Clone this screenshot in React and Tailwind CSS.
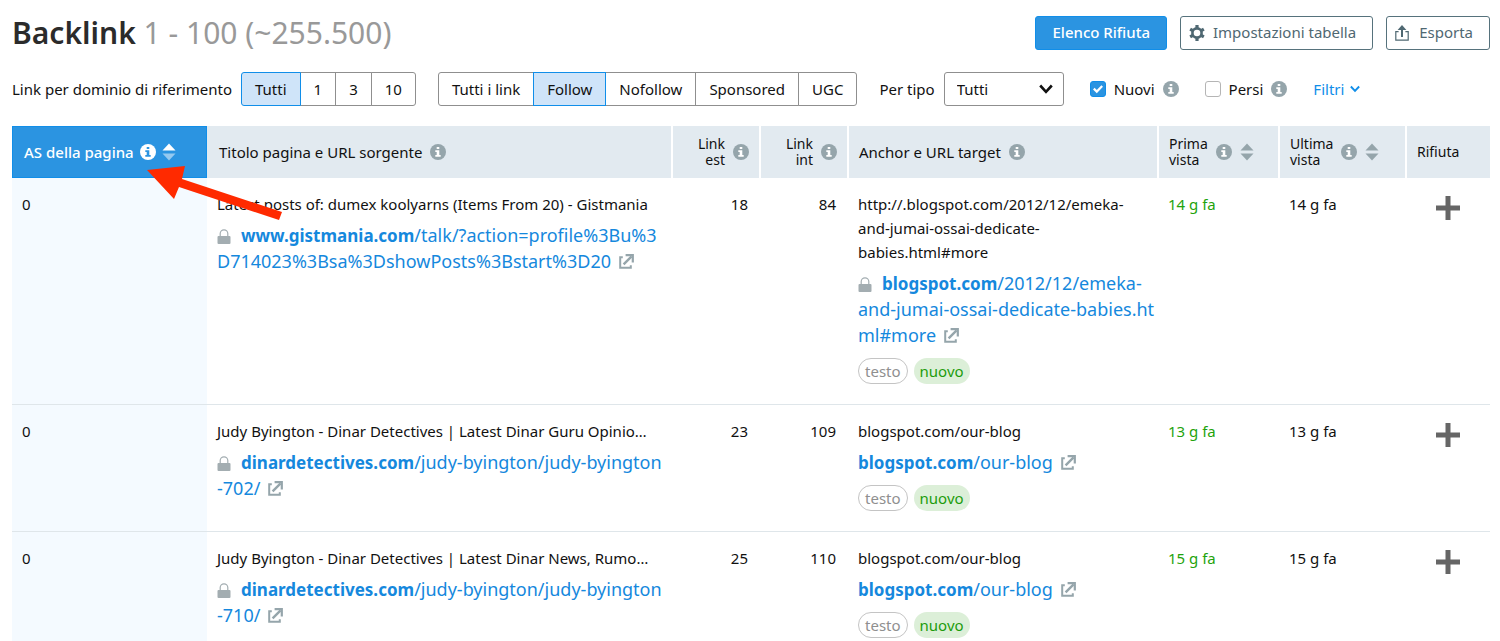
import React from "react";

const DOMAIN_OPTIONS = ["Tutti", "1", "3", "10"];
const FOLLOW_OPTIONS = ["Tutti i link", "Follow", "Nofollow", "Sponsored", "UGC"];

const ROWS = [
  {
    id: 1,
    score: 0,
    title: "Latest posts of: dumex koolyarns (Items From 20) - Gistmania",
    source: {
      secure: true,
      host: "www.gistmania.com",
      lines: ["/talk/?action=profile%3Bu%3", "D714023%3Bsa%3DshowPosts%3Bstart%3D20"],
    },
    external: 18,
    internal: 84,
    anchor: ["http://.blogspot.com/2012/12/emeka-", "and-jumai-ossai-dedicate-", "babies.html#more"],
    target: {
      secure: true,
      host: "blogspot.com",
      lines: ["/2012/12/emeka-", "and-jumai-ossai-dedicate-babies.ht", "ml#more"],
    },
    first: "14 g fa",
    last: "14 g fa",
  },
  {
    id: 2,
    score: 0,
    title: "Judy Byington - Dinar Detectives | Latest Dinar Guru Opinio…",
    source: {
      secure: true,
      host: "dinardetectives.com",
      lines: ["/judy-byington/judy-byington", "-702/"],
    },
    external: 23,
    internal: 109,
    anchor: ["blogspot.com/our-blog"],
    target: { secure: false, host: "blogspot.com", lines: ["/our-blog"] },
    first: "13 g fa",
    last: "13 g fa",
  },
  {
    id: 3,
    score: 0,
    title: "Judy Byington - Dinar Detectives | Latest Dinar News, Rumo…",
    source: {
      secure: true,
      host: "dinardetectives.com",
      lines: ["/judy-byington/judy-byington", "-710/"],
    },
    external: 25,
    internal: 110,
    anchor: ["blogspot.com/our-blog"],
    target: { secure: false, host: "blogspot.com", lines: ["/our-blog"] },
    first: "15 g fa",
    last: "15 g fa",
  },
];

function InfoIcon({ className = "text-[#95a5ab]", mark = "#fff" }) {
  return (
    <svg viewBox="0 0 16 16" className={`h-4 w-4 shrink-0 ${className}`} aria-hidden="true">
      <circle cx="8" cy="8" r="8" fill="currentColor" />
      <path d="M6.7 2.9h2.6v2H6.7zM5.3 6.3h4v4.8h1.4v1.6H5.3v-1.6h1.4V7.9H5.3z" fill={mark} />
    </svg>
  );
}

function SortIcon({ active }) {
  return (
    <svg viewBox="0 0 14 18" className="h-[18px] w-3.5 shrink-0" aria-hidden="true">
      <path d="M7 .5L13.5 7.5H.5z" fill={active ? "#fff" : "#95a5ab"} />
      <path d="M7 17.5l6.5-7H.5z" fill={active ? "#95c9f0" : "#95a5ab"} />
    </svg>
  );
}

function LockIcon() {
  return (
    <svg viewBox="0 0 14 15" className="mr-2.5 inline-block h-[15px] w-3.5 align-[-2px]" aria-hidden="true">
      <path d="M3.2 7.5V4.6a3.8 3.8 0 0 1 7.6 0v2.9" fill="none" stroke="#a3adb1" strokeWidth="1.2" />
      <rect x="0.5" y="7" width="13" height="8" rx="1" fill="#a3adb1" />
    </svg>
  );
}

function ExternalIcon() {
  return (
    <svg viewBox="0 0 15 15" className="ml-2 inline-block h-[15px] w-[15px] align-[-1px]" aria-hidden="true">
      <path d="M3.8 3.2H1.2v10.6h10.6v-2.6" fill="none" stroke="#95a5ab" strokeWidth="2" />
      <path d="M4.6 10.4L12.6 2.4" fill="none" stroke="#95a5ab" strokeWidth="2.4" />
      <path d="M6.6 1.2h7.2v7.2" fill="none" stroke="#95a5ab" strokeWidth="2.2" />
    </svg>
  );
}

function GearIcon() {
  return (
    <svg viewBox="0 0 16 16" className="h-4 w-4 shrink-0" aria-hidden="true">
      <circle cx="8" cy="8" r="4.6" fill="none" stroke="currentColor" strokeWidth="2.6" />
      <path d="M6.4.1h3.2v3H6.4zM6.4 12.9h3.2v3H6.4z" fill="currentColor" />
      <path d="M6.4.1h3.2v3H6.4zM6.4 12.9h3.2v3H6.4z" fill="currentColor" transform="rotate(60 8 8)" />
      <path d="M6.4.1h3.2v3H6.4zM6.4 12.9h3.2v3H6.4z" fill="currentColor" transform="rotate(120 8 8)" />
    </svg>
  );
}

function ExportIcon() {
  return (
    <svg viewBox="0 0 14 16" className="h-4 w-3.5 shrink-0" aria-hidden="true">
      <path d="M3.6 6.6H.8v8.6h12.4V6.6h-2.8" fill="none" stroke="currentColor" strokeWidth="1.2" />
      <path d="M7 12V3" fill="none" stroke="currentColor" strokeWidth="2" />
      <path d="M7 0l4.4 5H2.6z" fill="currentColor" />
    </svg>
  );
}

function ChevronIcon({ className }) {
  return (
    <svg viewBox="0 0 14 10" className={className} aria-hidden="true">
      <path d="M1.2 1.5L7 7.8l5.8-6.3" fill="none" stroke="currentColor" strokeWidth="2.6" />
    </svg>
  );
}

function ButtonGroup({ label, options, selected }) {
  return (
    <div role="group" aria-label={label} className="flex">
      {options.map((option) => (
        <button
          key={option}
          type="button"
          aria-pressed={option === selected}
          className={`-ml-px h-[34px] border px-[13px] first:ml-0 first:rounded-l-[3px] last:rounded-r-[3px] ${
            option === selected
              ? "relative border-[#108ee9] bg-[#cfe4f9]"
              : "border-[#8f8f8f] bg-white"
          }`}
        >
          {option}
        </button>
      ))}
    </div>
  );
}

function CheckField({ label, defaultChecked }) {
  return (
    <div className="flex items-center gap-2">
      <label className="flex items-center gap-2">
        <span className="grid">
          <input
            type="checkbox"
            defaultChecked={defaultChecked}
            className="peer col-start-1 row-start-1 h-4 w-4 appearance-none rounded-[3px] border border-[#b5b5b5] bg-white checked:border-[#108ee9] checked:bg-[#2b94e1]"
          />
          <svg
            viewBox="0 0 16 16"
            className="pointer-events-none col-start-1 row-start-1 hidden h-4 w-4 peer-checked:block"
            aria-hidden="true"
          >
            <path d="M3.8 7.6l3 3 5.4-5.6" fill="none" stroke="#fff" strokeWidth="2.2" />
          </svg>
        </span>
        {label}
      </label>
      <InfoIcon />
    </div>
  );
}

function UrlLink({ url }) {
  return (
    <div className="mt-1.5 text-lg leading-[26px]">
      {url.secure && <LockIcon />}
      <a href="#" className="text-[#1588dd]">
        <b className="text-[17px] leading-none">{url.host}</b>
        {url.lines.map((line, i) => (
          <React.Fragment key={line}>
            {i > 0 && <br />}
            {line}
          </React.Fragment>
        ))}
      </a>
      <ExternalIcon />
    </div>
  );
}

function HeadCell({ children, className = "" }) {
  return (
    <th scope="col" className={`h-[52px] bg-[#e2eaf0] p-0 text-left font-normal ${className}`}>
      {children}
    </th>
  );
}

function BacklinkRow({ row }) {
  return (
    <tr className="border-b border-[#dfe6ea] align-top leading-6 whitespace-nowrap">
      <td className="bg-[#f4faff] pt-3.5 pl-2.5">{row.score}</td>
      <td className="pt-3.5 pl-2.5">
        <div>{row.title}</div>
        <UrlLink url={row.source} />
      </td>
      <td className="pt-3.5 pr-3 text-right">{row.external}</td>
      <td className="pt-3.5 pr-3 text-right">{row.internal}</td>
      <td className="pt-3.5 pb-5 pl-2.5">
        {row.anchor.map((line) => (
          <div key={line}>{line}</div>
        ))}
        <UrlLink url={row.target} />
        <div className="mt-2.5 flex gap-1.5">
          <span className="flex h-[26px] items-center rounded-full border border-[#c4c4c4] px-1.5 text-[#8f8f8f]">
            testo
          </span>
          <span className="flex h-[26px] items-center rounded-full bg-[#dcefd8] px-1.5 text-[#1d9c0c]">
            nuovo
          </span>
        </div>
      </td>
      <td className="pt-3.5 pl-2.5 text-[#1fa30d]">{row.first}</td>
      <td className="pt-3.5 pl-2.5">{row.last}</td>
      <td className="pt-[18px] text-center">
        <button type="button" aria-label="Rifiuta" className="inline-block align-top">
          <svg viewBox="0 0 24 24" className="h-6 w-6" aria-hidden="true">
            <path d="M9.5 0h5v9.5H24v5h-9.5V24h-5v-9.5H0v-5h9.5z" fill="#666" />
          </svg>
        </button>
      </td>
    </tr>
  );
}

export default function App() {
  return (
    <main className="h-screen overflow-hidden bg-white pr-2.5 pl-3 font-['Noto_Sans',sans-serif] text-[15px] text-[#111]">
      <header className="flex items-center justify-between pt-[15px]">
        <h1 className="text-[30px] leading-[35px] text-[#999]">
          <b className="font-semibold text-[#2b2b2b]">Backlink</b> 1 - 100 (~255.500)
        </h1>
        <div className="flex gap-[13px]">
          <button
            type="button"
            className="h-[34px] rounded-[3px] border border-[#108ee9] bg-[#2b94e1] px-4 font-medium text-white"
          >
            Elenco Rifiuta
          </button>
          <button
            type="button"
            className="flex h-[34px] items-center gap-2 rounded-[3px] border border-[#56727c] pr-4 pl-2 text-[#4f6872]"
          >
            <GearIcon />
            Impostazioni tabella
          </button>
          <button
            type="button"
            className="flex h-[34px] items-center gap-2.5 rounded-[3px] border border-[#56727c] pr-4 pl-2 text-[#4f6872]"
          >
            <ExportIcon />
            Esporta
          </button>
        </div>
      </header>

      <div className="mt-[22px] flex items-center whitespace-nowrap">
        <span className="mr-[9px]">Link per dominio di riferimento</span>
        <ButtonGroup label="Link per dominio di riferimento" options={DOMAIN_OPTIONS} selected="Tutti" />
        <div className="ml-[22px]">
          <ButtonGroup label="Tipo di link" options={FOLLOW_OPTIONS} selected="Follow" />
        </div>
        <label htmlFor="type" className="ml-[22px]">
          Per tipo
        </label>
        <div className="relative ml-[9px]">
          <select
            id="type"
            className="h-[34px] w-[120px] appearance-none rounded-[3px] border border-[#8f8f8f] bg-white px-3"
          >
            <option>Tutti</option>
          </select>
          <ChevronIcon className="pointer-events-none absolute top-3 right-2.5 h-2.5 w-4" />
        </div>
        <div className="ml-[26px] flex items-center gap-[26px]">
          <CheckField label="Nuovi" defaultChecked />
          <CheckField label="Persi" />
          <button type="button" className="flex items-center gap-1.5 text-[#108ee9]">
            Filtri
            <ChevronIcon className="h-2 w-2.5" />
          </button>
        </div>
      </div>

      <div className="relative mt-5">
        <table className="w-full table-fixed border-collapse">
          <colgroup>
            <col className="w-[195px]" />
            <col />
            <col className="w-[88px]" />
            <col className="w-[88px]" />
            <col className="w-[310px]" />
            <col className="w-[121px]" />
            <col className="w-[127px]" />
            <col className="w-[84px]" />
          </colgroup>
          <thead>
            <tr>
              <th
                scope="col"
                className="h-[52px] bg-[#2b94e1] p-0 pl-3 text-left font-medium text-white inset-ring inset-ring-[#108ee9]"
              >
                <div className="flex items-center gap-1.5">
                  AS della pagina
                  <InfoIcon className="text-white" mark="#2b94e1" />
                  <SortIcon active />
                </div>
              </th>
              <HeadCell className="pl-3">
                <div className="flex items-center gap-2">
                  Titolo pagina e URL sorgente
                  <InfoIcon />
                </div>
              </HeadCell>
              <HeadCell className="border-l-2 border-white pr-2.5">
                <div className="flex items-center justify-end gap-2 text-right text-sm leading-4">
                  <span>
                    Link
                    <br />
                    est
                  </span>
                  <InfoIcon />
                </div>
              </HeadCell>
              <HeadCell className="border-l-2 border-white pr-2.5">
                <div className="flex items-center justify-end gap-2 text-right text-sm leading-4">
                  <span>
                    Link
                    <br />
                    int
                  </span>
                  <InfoIcon />
                </div>
              </HeadCell>
              <HeadCell className="border-l-2 border-white pl-2.5">
                <div className="flex items-center gap-2">
                  Anchor e URL target
                  <InfoIcon />
                </div>
              </HeadCell>
              <HeadCell className="border-l-2 border-white pl-2.5">
                <div className="flex items-center gap-2 text-sm leading-4">
                  <span>
                    Prima
                    <br />
                    vista
                  </span>
                  <InfoIcon />
                  <SortIcon />
                </div>
              </HeadCell>
              <HeadCell className="border-l-2 border-white pl-2.5">
                <div className="flex items-center gap-2 text-sm leading-4">
                  <span>
                    Ultima
                    <br />
                    vista
                  </span>
                  <InfoIcon />
                  <SortIcon />
                </div>
              </HeadCell>
              <HeadCell className="border-l-2 border-white pl-2.5 text-sm">Rifiuta</HeadCell>
            </tr>
          </thead>
          <tbody>
            {ROWS.map((row) => (
              <BacklinkRow key={row.id} row={row} />
            ))}
          </tbody>
        </table>

        <svg
          viewBox="0 0 136 56"
          className="pointer-events-none absolute top-10 left-[134px] h-14 w-[136px]"
          aria-hidden="true"
        >
          <path d="M1 4L39 0l-3 13 100 33-3 8L33 21l-5 12z" fill="#ff2a00" />
        </svg>
      </div>
    </main>
  );
}
